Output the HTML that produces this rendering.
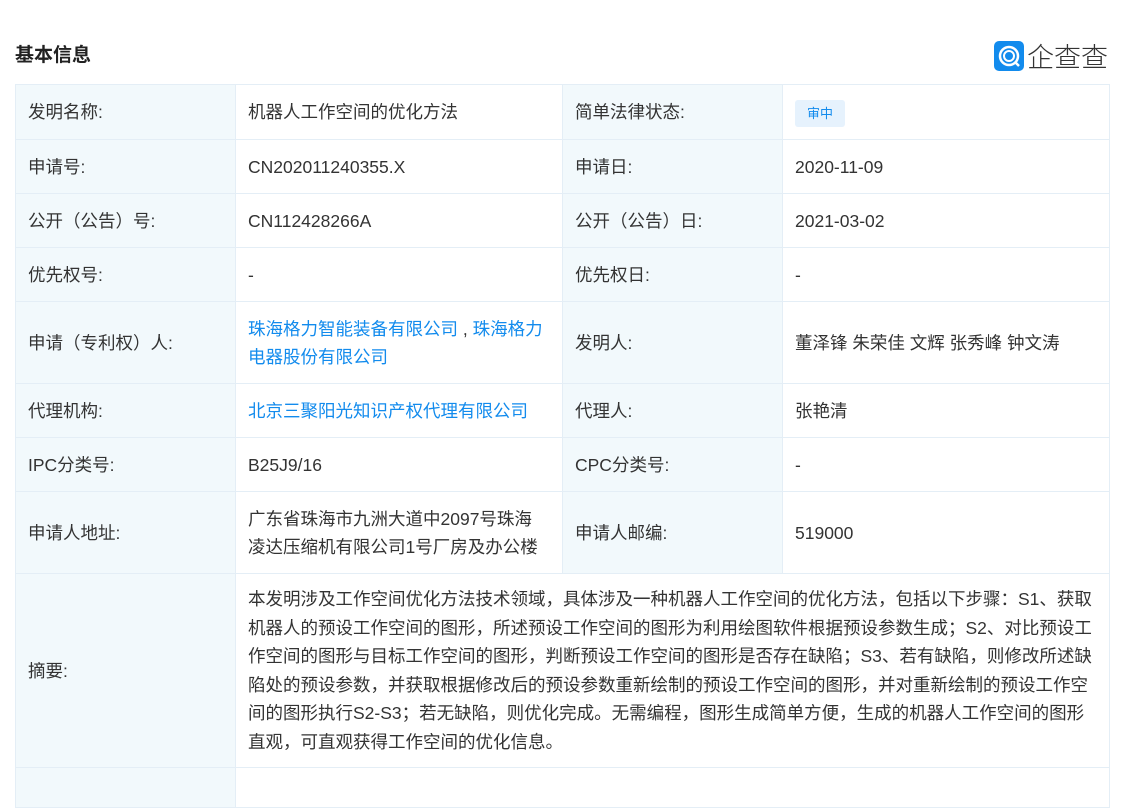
<!DOCTYPE html>
<html><head><meta charset="utf-8"><style>
body{margin:0;background:#fff;font-family:"Liberation Sans","Noto Sans CJK SC",sans-serif;color:#333;width:1127px;height:773px;overflow:hidden;position:relative}
h1{position:absolute;left:15px;top:40px;margin:0;font-size:19px;font-weight:bold;color:#222}
.logo{position:absolute;left:994px;top:36px;display:flex;align-items:center}
.logo .ic{width:30px;height:30px;background:#128bed;border-radius:5px;position:relative}
.logo span{font-size:27px;color:#333;margin-left:3px;letter-spacing:0px;font-weight:300}
table{position:absolute;left:15px;top:84px;border-collapse:collapse;width:1094px;font-size:17.5px;table-layout:fixed}
td{border:1px solid #e4eef6;padding:0 12px;line-height:28px;vertical-align:middle}
td.l{background:#f2f9fc;color:#333}
td.ab{line-height:28.5px;padding-right:14px}
a{color:#128bed;text-decoration:none}
.badge{display:inline-block;background:#e6f2fd;color:#128bed;font-size:13px;line-height:27px;padding:0 12px;border-radius:3px}
</style></head><body>
<h1>基本信息</h1>
<div class="logo"><div class="ic"><svg width="30" height="30" viewBox="0 0 30 30"><circle cx="15" cy="15" r="9" fill="none" stroke="#fff" stroke-width="2.5"/><circle cx="15" cy="15" r="5" fill="none" stroke="#fff" stroke-width="2"/><path d="M21 21 L25 25" stroke="#fff" stroke-width="2.5"/></svg></div><span>企查查</span></div>
<table>
<colgroup><col style="width:220px"><col style="width:327px"><col style="width:220px"><col style="width:327px"></colgroup>
<tr style="height:55px"><td class="l">发明名称:</td><td>机器人工作空间的优化方法</td><td class="l">简单法律状态:</td><td><span class="badge">审中</span></td></tr>
<tr style="height:54px"><td class="l">申请号:</td><td>CN202011240355.X</td><td class="l">申请日:</td><td>2020-11-09</td></tr>
<tr style="height:54px"><td class="l">公开（公告）号:</td><td>CN112428266A</td><td class="l">公开（公告）日:</td><td>2021-03-02</td></tr>
<tr style="height:54px"><td class="l">优先权号:</td><td>-</td><td class="l">优先权日:</td><td>-</td></tr>
<tr style="height:82px"><td class="l">申请（专利权）人:</td><td><a>珠海格力智能装备有限公司</a> , <a>珠海格力电器股份有限公司</a></td><td class="l">发明人:</td><td>董泽锋 朱荣佳 文辉 张秀峰 钟文涛</td></tr>
<tr style="height:54px"><td class="l">代理机构:</td><td><a>北京三聚阳光知识产权代理有限公司</a></td><td class="l">代理人:</td><td>张艳清</td></tr>
<tr style="height:54px"><td class="l">IPC分类号:</td><td>B25J9/16</td><td class="l">CPC分类号:</td><td>-</td></tr>
<tr style="height:82px"><td class="l">申请人地址:</td><td style="padding-right:18px">广东省珠海市九洲大道中2097号珠海凌达压缩机有限公司1号厂房及办公楼</td><td class="l">申请人邮编:</td><td>519000</td></tr>
<tr style="height:194px"><td class="l">摘要:</td><td colspan="3" class="ab">本发明涉及工作空间优化方法技术领域，具体涉及一种机器人工作空间的优化方法，包括以下步骤：S1、获取机器人的预设工作空间的图形，所述预设工作空间的图形为利用绘图软件根据预设参数生成；S2、对比预设工作空间的图形与目标工作空间的图形，判断预设工作空间的图形是否存在缺陷；S3、若有缺陷，则修改所述缺陷处的预设参数，并获取根据修改后的预设参数重新绘制的预设工作空间的图形，并对重新绘制的预设工作空间的图形执行S2-S3；若无缺陷，则优化完成。无需编程，图形生成简单方便，生成的机器人工作空间的图形直观，可直观获得工作空间的优化信息。</td></tr>
<tr style="height:40px"><td class="l"></td><td colspan="3"></td></tr>
</table>
</body></html>
